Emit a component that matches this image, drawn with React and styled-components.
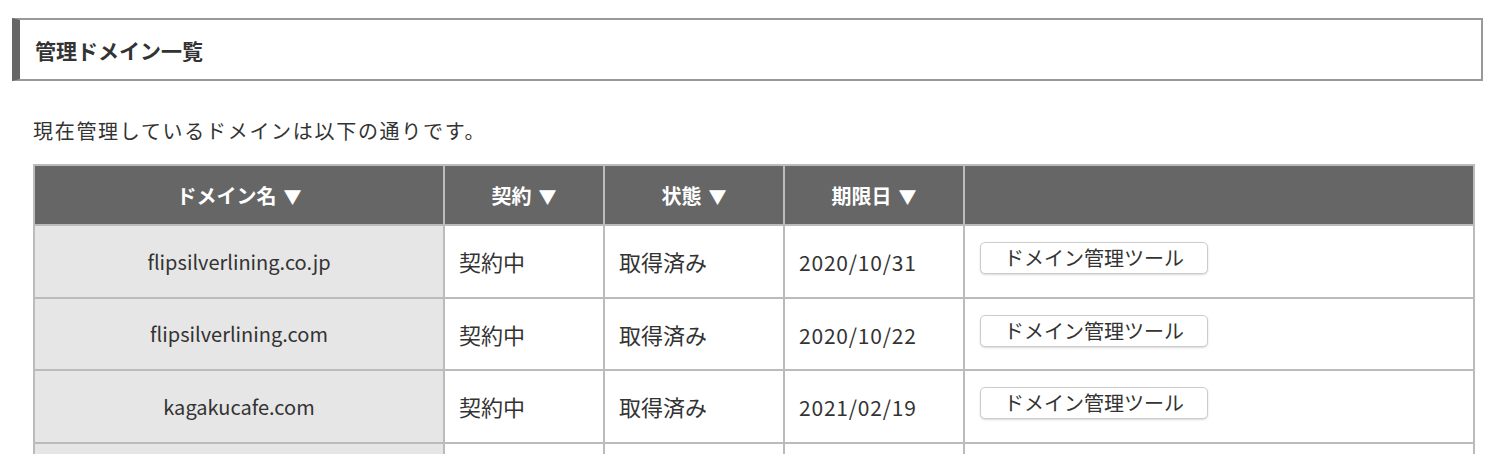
import styled, { createGlobalStyle } from 'styled-components'

const GlobalStyle = createGlobalStyle`
    html, body {
        margin: 0;
        padding: 0;
        background: #fff;
    }

    body {
        font-family: "Noto Sans CJK JP", "Noto Sans", sans-serif;
        color: #333;
    }
`

const Page = styled.main`
    padding: 18px 15px 0 12px;
`

const Heading = styled.h2`
    margin: 0;
    height: 59px;
    border: 2px solid #999;
    border-left: 8px solid #666;
    padding-left: 15px;

    display: flex;
    align-items: center;

    font-size: 21px;
    font-weight: 700;
    color: #333;
`

const Section = styled.section`
    padding: 0 10px 0 21px;
`

const Lead = styled.p`
    margin: 0;
    padding: 35px 0 19px;
    font-size: 20px;
    line-height: 29px;
    letter-spacing: 1.7px;
    color: #333;
`

const Table = styled.table`
    width: 100%;
    border-collapse: collapse;
    table-layout: fixed;
    border: 2px solid #bbb;
`

const HeadCell = styled.th`
    height: 58px;
    background: #666;
    color: #fff;
    border: 2px solid #bbb;
    font-size: 20px;
    font-weight: 700;
    text-align: center;
    padding: 0;

    .arrow {
        margin-left: 7px;
        font-size: 18px;
    }
`

const Cell = styled.td`
    height: 70.5px;
    border: 2px solid #bbb;
    padding: 0 14px;
    font-size: ${({ $latin }) => ($latin ? '20px' : '22px')};
    text-align: ${({ $center }) => ($center ? 'center' : 'left')};
    background: ${({ $shaded }) => ($shaded ? '#e6e6e6' : '#fff')};
    color: #333;
    vertical-align: middle;
`

const DateText = styled.span`
    font-size: 21px;
    letter-spacing: 0.8px;
`

const ToolButton = styled.button`
    display: block;
    width: 228px;
    height: 32px;
    margin: -6px 0 0 1px;
    border: 1px solid #ccc;
    border-radius: 5px;
    background: #fff;
    box-shadow: 0 1px 2px rgba(0, 0, 0, 0.15);
    font-family: inherit;
    font-size: 20px;
    line-height: 28px;
    color: #333;
    cursor: pointer;
    padding: 0;
`

const columns = [
    { label: 'ドメイン名', sortable: true, width: 410 },
    { label: '契約', sortable: true, width: 160 },
    { label: '状態', sortable: true, width: 180 },
    { label: '期限日', sortable: true, width: 180 },
    { label: '', sortable: false, width: 510 },
]

const domains = [
    { name: 'flipsilverlining.co.jp', contract: '契約中', status: '取得済み', expires: '2020/10/31' },
    { name: 'flipsilverlining.com', contract: '契約中', status: '取得済み', expires: '2020/10/22' },
    { name: 'kagakucafe.com', contract: '契約中', status: '取得済み', expires: '2021/02/19' },
    { name: 'kagakucafe.jp', contract: '契約中', status: '取得済み', expires: '2021/03/01' },
]

const App = () => (
    <>
        <GlobalStyle />
        <Page>
            <Heading>管理ドメイン一覧</Heading>
            <Section>
                <Lead>現在管理しているドメインは以下の通りです。</Lead>
                <Table>
                    <colgroup>
                        {columns.map((col, i) => <col key={i} width={col.width} />)}
                    </colgroup>
                    <thead>
                        <tr>
                            {columns.map((col, i) => (
                                <HeadCell key={i}>
                                    {col.label}
                                    {col.sortable && <span className='arrow'>▼</span>}
                                </HeadCell>
                            ))}
                        </tr>
                    </thead>
                    <tbody>
                        {domains.map(d => (
                            <tr key={d.name}>
                                <Cell $shaded $center $latin>{d.name}</Cell>
                                <Cell>{d.contract}</Cell>
                                <Cell>{d.status}</Cell>
                                <Cell><DateText>{d.expires}</DateText></Cell>
                                <Cell>
                                    <ToolButton>ドメイン管理ツール</ToolButton>
                                </Cell>
                            </tr>
                        ))}
                    </tbody>
                </Table>
            </Section>
        </Page>
    </>
)

export default App
